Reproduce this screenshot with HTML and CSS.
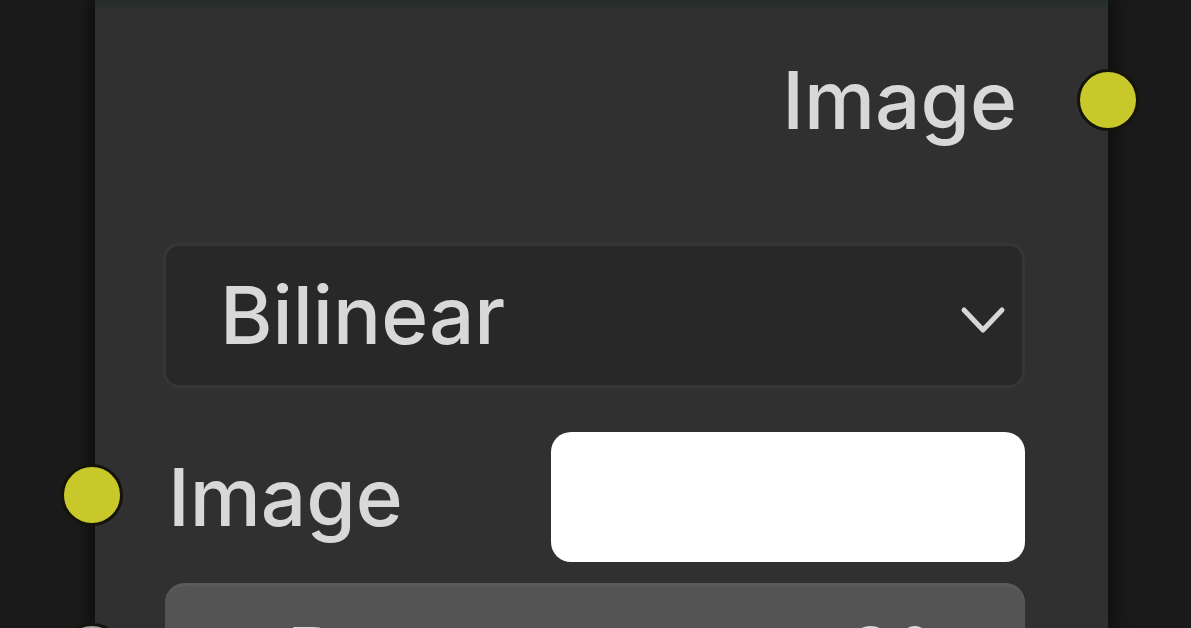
FILE: index.html
```html
<!DOCTYPE html>
<html>
<head>
<meta charset="utf-8">
<link rel="stylesheet" href="styles.css">
</head>
<body>
<div class="canvas">
  <div class="node">
    <div class="header-strip"></div>
    <div class="out-row">
      <span class="label">Image</span>
      <span class="socket socket-out"></span>
    </div>
    <div class="dropdown">
      <span class="label">Bilinear</span>
      <svg class="chevron" width="46" height="32" viewBox="0 0 46 32">
        <polyline points="4,6 23,26 42,6" fill="none" stroke="#d6d6d6" stroke-width="5" stroke-linecap="round" stroke-linejoin="round"/>
      </svg>
    </div>
    <div class="in-row">
      <span class="socket socket-in"></span>
      <span class="label">Image</span>
      <div class="color-field"></div>
    </div>
    <div class="slider-row">
      <span class="socket socket-in socket-grey"></span>
      <div class="slider">
        <span class="label">Degr</span>
        <span class="label">0°</span>
      </div>
    </div>
  </div>
</div>
</body>
</html>
```

FILE: styles.css
```css
html, body {
  margin: 0;
  padding: 0;
  background: #1a1a1a;
  overflow: hidden;
}

.canvas {
  width: 1191px;
  height: 628px;
  padding-left: 95px;
  box-sizing: border-box;
}

.node {
  position: relative;
  width: 1013px;
  height: 628px;
  background: #303030;
  box-shadow: -6px 0 14px rgba(0,0,0,0.45), 8px 0 14px rgba(0,0,0,0.35);
  font-family: Inter, "DejaVu Sans", sans-serif;
  color: #d8d8d8;
}

.header-strip {
  height: 8px;
  background: linear-gradient(#222c2a, #2b302f);
}

.label {
  font-size: 80px;
  font-weight: 500;
  line-height: 1.21;
  white-space: nowrap;
}

.out-row {
  position: relative;
  height: 184px;
  display: flex;
  align-items: center;
  justify-content: flex-end;
  padding-right: 91px;
}

.socket {
  position: absolute;
  width: 56px;
  height: 56px;
  border-radius: 50%;
  background: #c8c82a;
  border: 3px solid #14140a;
  box-sizing: content-box;
}

.socket-out {
  right: -31px;
  top: 61px;
}

.dropdown {
  margin: 51px 83px 0 68px;
  height: 145px;
  box-sizing: border-box;
  background: #282828;
  border: 3px solid #363636;
  border-radius: 16px;
  display: flex;
  align-items: center;
  justify-content: space-between;
  padding: 0 16px 0 54px;
}

.chevron {
  margin-top: 8px;
}

.in-row {
  position: relative;
  margin: 44px 83px 0 73px;
  height: 130px;
  display: flex;
  align-items: center;
  justify-content: space-between;
}

.socket-in {
  left: -107px;
  top: 32px;
}

.color-field {
  width: 474px;
  height: 130px;
  background: #ffffff;
  border-radius: 20px;
}

.slider-row {
  position: relative;
  margin: 21px 83px 0 70px;
}

.socket-grey {
  background: #a1a1a1;
  left: -104px;
  top: 40px;
}

.slider {
  height: 130px;
  box-sizing: border-box;
  padding: 16px 92px 0 122px;
  background: #545454;
  border-radius: 20px;
  display: flex;
  align-items: center;
  justify-content: space-between;
  box-shadow: inset 0 3px 0 #5a5a5a;
}
```
